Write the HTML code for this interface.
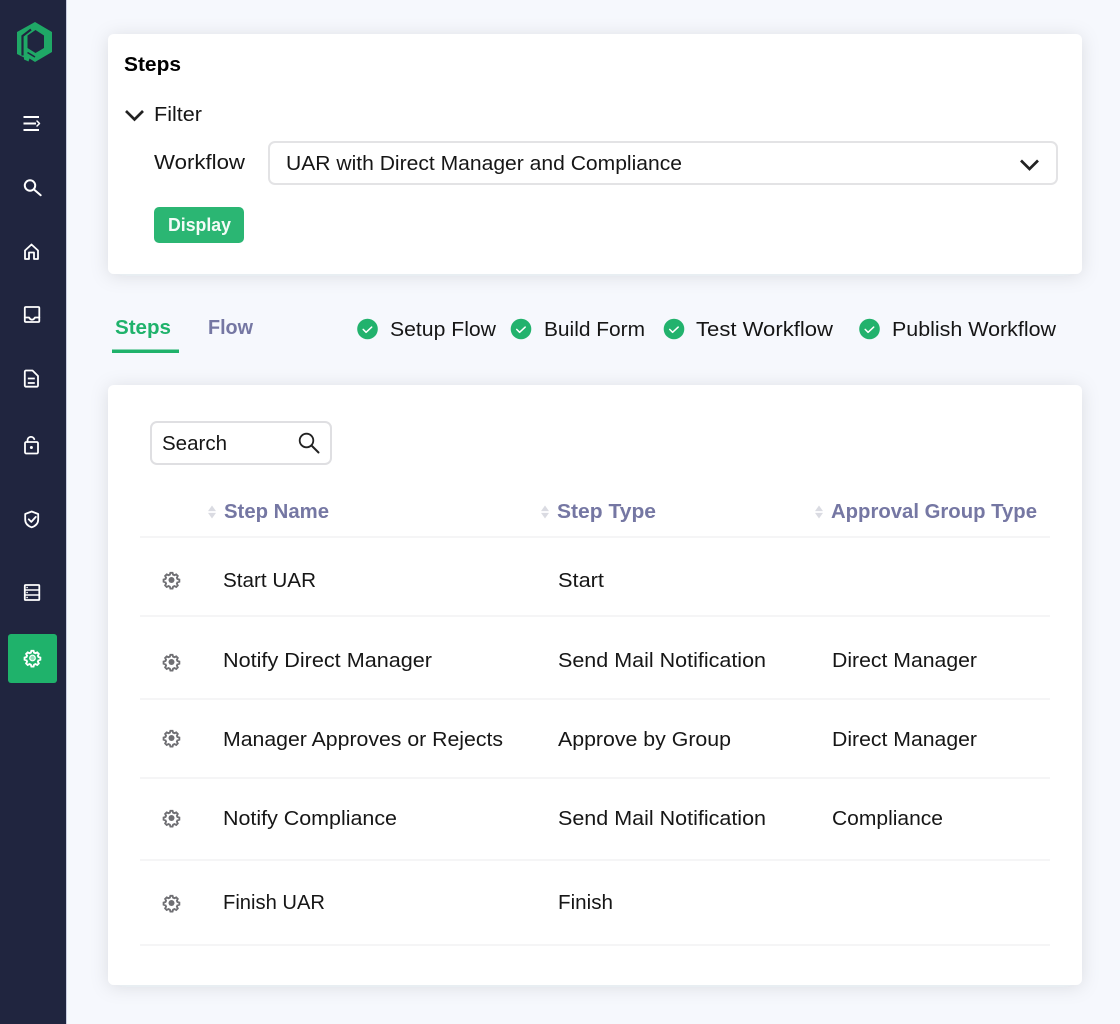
<!DOCTYPE html>
<html><head><meta charset="utf-8">
<style>
html,body{margin:0;padding:0;background:#f6f8fd;width:1120px;height:1024px;overflow:hidden}
svg{display:block}
text{font-family:"Liberation Sans",sans-serif;font-size:20px;fill:#161616;}
.b{font-weight:700;fill:#000}
.p{fill:#7577a3;font-weight:700}
.g{fill:#1fb26b;font-weight:700}
.sb{fill:none;stroke:#fff;stroke-width:1.8;stroke-linecap:round;stroke-linejoin:round}
.l{stroke:#efeff1;stroke-width:1.2}
</style></head>
<body>
<svg width="1120" height="1024" viewBox="0 0 1120 1024" xmlns="http://www.w3.org/2000/svg">
<defs>
<filter id="s" x="-5%" y="-12%" width="110%" height="124%"><feDropShadow dx="0" dy="2" stdDeviation="9" flood-color="#20253f" flood-opacity="0.11"/></filter>
<g id="gear"><path d="M12 3.2l1.3 0 .7 2.3 1.600 .7 2.200-1.100 1.900 1.900-1.100 2.200 .7 1.600 2.300 .7v2.600l-2.300 .7-.7 1.600 1.100 2.200-1.900 1.900-2.200-1.100-1.600 .7-.7 2.300h-2.600l-.7-2.300-1.600-.7-2.200 1.100-1.900-1.900 1.100-2.200-.7-1.600-2.300-.7v-2.600l2.300-.7 .7-1.600-1.100-2.200 1.900-1.900 2.200 1.100 1.600-.7 .7-2.300z" transform="translate(-0.7 -0.400)"/></g>
<g id="chk"><circle r="10.300" fill="#22b26d"/><path d="M-4.300 .4l2.900 2.900 5.600-5.200" fill="none" stroke="#fff" stroke-width="1.500" stroke-linecap="round" stroke-linejoin="round"/></g>
<g id="sort"><path d="M-4-.9L0-6.500l4 5.600zM-4 .9L0 6.500l4-5.600z" fill="#dadbe2"/></g>
</defs>

<rect width="1120" height="1024" fill="#f6f8fd"/>

<!-- sidebar -->
<rect x="0" y="0" width="66" height="1024" fill="#20253f"/>
<rect x="66" y="0" width="1" height="1024" fill="#c9cde0"/>
<path fill="#1fa866" fill-rule="evenodd" d="M35 22L52 32V52L35 62L29.500 58.500L28.500 61.500L24 59.500V57.500L17 54V32ZM35.500 30L27.500 35.500V48L35.500 53L44 48V35.500Z"/>
<path d="M22.500 55.500V36L31 29.500" fill="none" stroke="#20253f" stroke-width="2.200"/>
<path d="M27.500 52.500L35 57" fill="none" stroke="#20253f" stroke-width="1.600"/>
<g class="sb">
<path d="M23.500 117H39M23.500 123.500H36M23.500 130H39" stroke-width="2.100" stroke-linecap="butt"/><path d="M37 121l2.500 2.500-2.500 2.500" stroke-width="1.500"/>
<circle cx="30" cy="185.500" r="5.200" stroke-width="2"/><path d="M34 189.500l6.700 5.700" stroke-width="2"/>
<path d="M25 259V250.500L31.500 244.500L38 250.500V259H34V252.500H29V259Z"/>
<rect x="24.800" y="307" width="14.500" height="15" rx="1"/><path d="M24.800 317.500h4.200c1 1.700 1.800 2.200 3 2.200s2-.5 3-2.200h4.300"/>
<path d="M26 370.500H32.500L38 376V385.500A1.200 1.200 0 0 1 36.800 386.700H26A1.200 1.200 0 0 1 24.800 385.500V371.700A1.200 1.200 0 0 1 26 370.500Z"/><path d="M27.800 378.500h7M27.800 383h7" stroke-width="1.700" stroke-linecap="butt"/>
<rect x="25" y="442" width="13" height="11.500" rx="1.200"/><path d="M27.500 442v-1.800a3.500 3.500 0 0 1 6.800-1"/><circle cx="31.400" cy="447.500" r="1" fill="#fff" stroke-width="1"/>
<path d="M31.700 511.500L38.200 514V519.500C38.200 523.500 35.500 526 31.700 527.300C27.900 526 25.200 523.500 25.200 519.500V514Z"/><path d="M28.700 519.300l2.600 2.600 4.500-5"/>
<rect x="24.800" y="585" width="14.500" height="15" rx=".8"/><path d="M24.800 590H39.300M24.800 595H39.300" stroke-width="1.600"/><path d="M27 587.500h.2M27 592.500h.2M27 597.500h.2" stroke-width="1.500"/>
</g>
<rect x="8" y="634" width="49" height="49" rx="3" fill="#1fb26b"/>
<use href="#gear" transform="translate(23.200 648.500) scale(.82)" fill="none" stroke="#fff" stroke-width="2.300"/>
<circle cx="32.500" cy="658" r="2.800" fill="#8fdcb6" stroke="#fff" stroke-width="1.200"/>

<!-- card 1 -->
<rect x="108" y="34" width="974" height="240" rx="6" fill="#fff" filter="url(#s)"/>
<text x="124" y="71" class="b" textLength="57" lengthAdjust="spacingAndGlyphs">Steps</text>
<path d="M126 111l8.500 8.500 8.500-8.500" fill="none" stroke="#222" stroke-width="2.700"/>
<text x="154" y="121" textLength="48" lengthAdjust="spacingAndGlyphs">Filter</text>
<text x="154" y="169" textLength="91" lengthAdjust="spacingAndGlyphs">Workflow</text>
<rect x="269" y="142" width="788" height="42" rx="6" fill="#fff" stroke="#e3e3e5" stroke-width="2"/>
<text x="286" y="170" textLength="396" lengthAdjust="spacingAndGlyphs">UAR with Direct Manager and Compliance</text>
<path d="M1021 160.500l8.500 8.500 8.500-8.500" fill="none" stroke="#222" stroke-width="2.700"/>
<rect x="154" y="207" width="90" height="36" rx="5" fill="#2bb673"/>
<text x="168" y="231" textLength="63" lengthAdjust="spacingAndGlyphs" style="fill:#f4fbf7;font-size:18px;font-weight:700">Display</text>

<!-- tabs -->
<text x="115" y="334" class="g" textLength="56" lengthAdjust="spacingAndGlyphs">Steps</text>
<rect x="112" y="349.500" width="67" height="3.500" fill="#1fb26b"/>
<text x="208" y="334" class="p" textLength="45" lengthAdjust="spacingAndGlyphs">Flow</text>
<use href="#chk" x="367.500" y="329"/>
<text x="390" y="336" textLength="106" lengthAdjust="spacingAndGlyphs">Setup Flow</text>
<use href="#chk" x="521" y="329"/>
<text x="544" y="336" textLength="101" lengthAdjust="spacingAndGlyphs">Build Form</text>
<use href="#chk" x="674" y="329"/>
<text x="696" y="336" textLength="137" lengthAdjust="spacingAndGlyphs">Test Workflow</text>
<use href="#chk" x="869.500" y="329"/>
<text x="892" y="336" textLength="164" lengthAdjust="spacingAndGlyphs">Publish Workflow</text>

<!-- card 2 -->
<rect x="108" y="385" width="974" height="600" rx="6" fill="#fff" filter="url(#s)"/>
<rect x="151" y="422" width="180" height="42" rx="6" fill="#fff" stroke="#dfdfe2" stroke-width="2"/>
<text x="162" y="450" textLength="65" lengthAdjust="spacingAndGlyphs">Search</text>
<circle cx="306.500" cy="440.500" r="6.800" fill="none" stroke="#222" stroke-width="1.800"/>
<path d="M311.500 445.500l7 7" stroke="#222" stroke-width="2" stroke-linecap="round"/>

<use href="#sort" x="212" y="512"/>
<text x="224" y="518" class="p" textLength="105" lengthAdjust="spacingAndGlyphs">Step Name</text>
<use href="#sort" x="545" y="512"/>
<text x="557" y="518" class="p" textLength="99" lengthAdjust="spacingAndGlyphs">Step Type</text>
<use href="#sort" x="819" y="512"/>
<text x="831" y="518" class="p" textLength="206" lengthAdjust="spacingAndGlyphs">Approval Group Type</text>

<path class="l" d="M140 537H1050M140 616H1050M140 699H1050M140 778H1050M140 860H1050M140 945H1050"/>

<g fill="none" stroke="#6f6f73" stroke-width="2.300">
<use href="#gear" transform="translate(162.200 570.500) scale(.82)"/>
<use href="#gear" transform="translate(162.200 652.500) scale(.82)"/>
<use href="#gear" transform="translate(162.200 728.500) scale(.82)"/>
<use href="#gear" transform="translate(162.200 808.500) scale(.82)"/>
<use href="#gear" transform="translate(162.200 893.500) scale(.82)"/>
</g>
<g fill="#6f6f73">
<circle cx="171.500" cy="580" r="3"/><circle cx="171.500" cy="662" r="3"/><circle cx="171.500" cy="738" r="3"/><circle cx="171.500" cy="818" r="3"/><circle cx="171.500" cy="903" r="3"/>
</g>

<text x="223" y="587" textLength="93" lengthAdjust="spacingAndGlyphs">Start UAR</text>
<text x="558" y="587" textLength="46" lengthAdjust="spacingAndGlyphs">Start</text>
<text x="223" y="667" textLength="209" lengthAdjust="spacingAndGlyphs">Notify Direct Manager</text>
<text x="558" y="667" textLength="208" lengthAdjust="spacingAndGlyphs">Send Mail Notification</text>
<text x="832" y="667" textLength="145" lengthAdjust="spacingAndGlyphs">Direct Manager</text>
<text x="223" y="746" textLength="280" lengthAdjust="spacingAndGlyphs">Manager Approves or Rejects</text>
<text x="558" y="746" textLength="173" lengthAdjust="spacingAndGlyphs">Approve by Group</text>
<text x="832" y="746" textLength="145" lengthAdjust="spacingAndGlyphs">Direct Manager</text>
<text x="223" y="825" textLength="174" lengthAdjust="spacingAndGlyphs">Notify Compliance</text>
<text x="558" y="825" textLength="208" lengthAdjust="spacingAndGlyphs">Send Mail Notification</text>
<text x="832" y="825" textLength="111" lengthAdjust="spacingAndGlyphs">Compliance</text>
<text x="223" y="909" textLength="102" lengthAdjust="spacingAndGlyphs">Finish UAR</text>
<text x="558" y="909" textLength="55" lengthAdjust="spacingAndGlyphs">Finish</text>
</svg>
</body></html>
